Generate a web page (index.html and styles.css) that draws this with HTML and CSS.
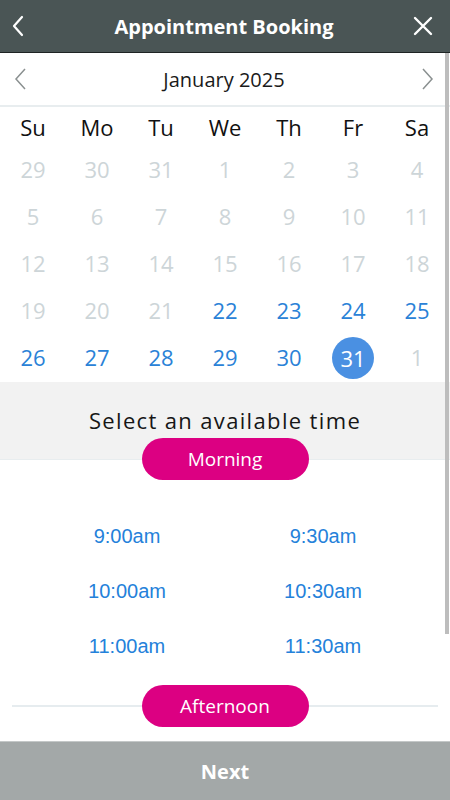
FILE: index.html
```html
<!DOCTYPE html>
<html lang="en">
<head>
  <meta charset="UTF-8">
  <meta name="viewport" content="width=device-width, initial-scale=1.0">
  <title>Appointment Booking</title>
  <link rel="stylesheet" href="styles.css">
</head>
<body>
  <div class="titlebar">
    <button class="icon-btn">
      <svg width="14" height="24" viewBox="0 0 14 24"><path d="M11 3 L3 12 L11 21" fill="none" stroke="#fff" stroke-width="2.2" stroke-linecap="round" stroke-linejoin="round"/></svg>
    </button>
    <div class="title">Appointment Booking</div>
    <button class="icon-btn">
      <svg width="20" height="20" viewBox="0 0 20 20"><path d="M2 2 L18 18 M18 2 L2 18" fill="none" stroke="#fff" stroke-width="2.4" stroke-linecap="round"/></svg>
    </button>
  </div>

  <div class="content">
    <div class="month-nav">
      <button class="nav-btn">
        <svg width="14" height="24" viewBox="0 0 14 24"><path d="M11 2 L2 12 L11 22" fill="none" stroke="#8a9090" stroke-width="1.5"/></svg>
      </button>
      <div class="month">January 2025</div>
      <button class="nav-btn">
        <svg width="14" height="24" viewBox="0 0 14 24"><path d="M3 2 L12 12 L3 22" fill="none" stroke="#8a9090" stroke-width="1.5"/></svg>
      </button>
    </div>

    <div class="weekdays">
      <span>Su</span><span>Mo</span><span>Tu</span><span>We</span><span>Th</span><span>Fr</span><span>Sa</span>
    </div>

    <div class="days" id="days"></div>

    <div class="time-head">
      <div class="time-title">Select an available time</div>
      <div class="pill">Morning</div>
    </div>

    <div class="slots">
      <a class="slot">9:00am</a>
      <a class="slot">9:30am</a>
      <a class="slot">10:00am</a>
      <a class="slot">10:30am</a>
      <a class="slot">11:00am</a>
      <a class="slot">11:30am</a>
    </div>

    <div class="divider">
      <div class="pill">Afternoon</div>
    </div>

    <div class="scrollbar"></div>
  </div>

  <div class="next-bar">Next</div>

  <script>
    // Build the January 2025 grid, with the days that can be booked in blue
    const days = document.getElementById('days');
    const cells = [];
    [29, 30, 31].forEach(d => cells.push({ d: d, cls: 'off' }));
    for (let d = 1; d <= 31; d++) {
      cells.push({ d: d, cls: d >= 22 ? 'open' : 'off' });
    }
    cells.push({ d: 1, cls: 'off' });

    cells.forEach(c => {
      const el = document.createElement('span');
      el.className = 'day ' + c.cls;
      if (c.d === 31 && c.cls === 'open') el.className += ' selected';
      el.textContent = c.d;
      days.appendChild(el);
    });
  </script>
</body>
</html>
```

FILE: styles.css
```css
body {
  font-family: 'Open Sans', 'DejaVu Sans', sans-serif;
  margin: 0;
  padding: 0;
  width: 450px;
  height: 800px;
  display: flex;
  flex-direction: column;
  background-color: #FFFFFF;
  overflow: hidden;
}

button {
  border: none;
  background: none;
  padding: 0;
  cursor: pointer;
  outline: none;
}

.titlebar {
  height: 52px;
  flex-shrink: 0;
  display: flex;
  align-items: center;
  justify-content: space-between;
  padding: 0 13px 0 11px;
  background-color: #4A5555;
  border-bottom: 1px solid #1E2424;
}

.icon-btn {
  display: flex;
  align-items: center;
  width: 24px;
  height: 30px;
}

.title {
  color: #FFFFFF;
  font-size: 20px;
  font-weight: 700;
}

.content {
  flex: 1;
  position: relative;
  overflow: hidden;
}

.month-nav {
  height: 52px;
  display: flex;
  align-items: center;
  justify-content: space-between;
  padding: 0 16px 0 14px;
  border-bottom: 2px solid #E8EDEF;
}

.nav-btn {
  display: flex;
  align-items: center;
  height: 30px;
}

.month {
  font-size: 20px;
  color: #1A1A1A;
}

.weekdays,
.days {
  display: grid;
  grid-template-columns: repeat(7, 64px);
  padding-left: 1px;
}

.weekdays span {
  height: 40px;
  display: flex;
  align-items: center;
  justify-content: center;
  font-size: 22px;
  color: #111111;
}

.day {
  height: 47px;
  padding-bottom: 4px;
  box-sizing: border-box;
  display: flex;
  align-items: center;
  justify-content: center;
  font-size: 22px;
}

.day.off {
  color: #CDD5D8;
}

.day.open {
  color: #2A82D7;
}

.day.selected {
  width: 42px;
  height: 42px;
  padding-bottom: 0;
  margin: 2px auto 0;
  align-self: start;
  border-radius: 50%;
  background-color: #4A90E2;
  color: #FFFFFF;
}

.time-head {
  background-color: #F2F2F2;
  border-bottom: 1px solid #E8EDEF;
  padding-top: 23px;
  display: flex;
  flex-direction: column;
  align-items: center;
}

.time-title {
  font-size: 22px;
  line-height: 30px;
  letter-spacing: 1.35px;
  color: #161616;
}

.pill {
  width: 167px;
  height: 42px;
  border-radius: 21px;
  background-color: #DC0082;
  color: #FFFFFF;
  font-size: 19px;
  display: flex;
  align-items: center;
  justify-content: center;
}

.time-head .pill {
  margin-top: 3px;
  margin-bottom: -21px;
  position: relative;
}

.slots {
  display: grid;
  grid-template-columns: 196px 196px;
  padding: 49px 29px 0;
}

.slot {
  height: 55px;
  display: flex;
  align-items: center;
  justify-content: center;
  font-family: 'Liberation Sans', Arial, sans-serif;
  font-size: 20px;
  color: #2481DA;
}

.divider {
  margin: 11px 12px 0;
  height: 42px;
  display: flex;
  align-items: center;
  justify-content: center;
  background: linear-gradient(#E6ECEF, #E6ECEF) center / 100% 2px no-repeat;
}

.scrollbar {
  position: absolute;
  top: 0;
  right: 1px;
  width: 4px;
  height: 581px;
  background-color: #BDBDBD;
}

.next-bar {
  height: 58px;
  flex-shrink: 0;
  display: flex;
  align-items: center;
  justify-content: center;
  background-color: #A3A8A8;
  border-top: 1px solid #C4C8C8;
  color: #FFFFFF;
  font-size: 20px;
  font-weight: 700;
}
```
